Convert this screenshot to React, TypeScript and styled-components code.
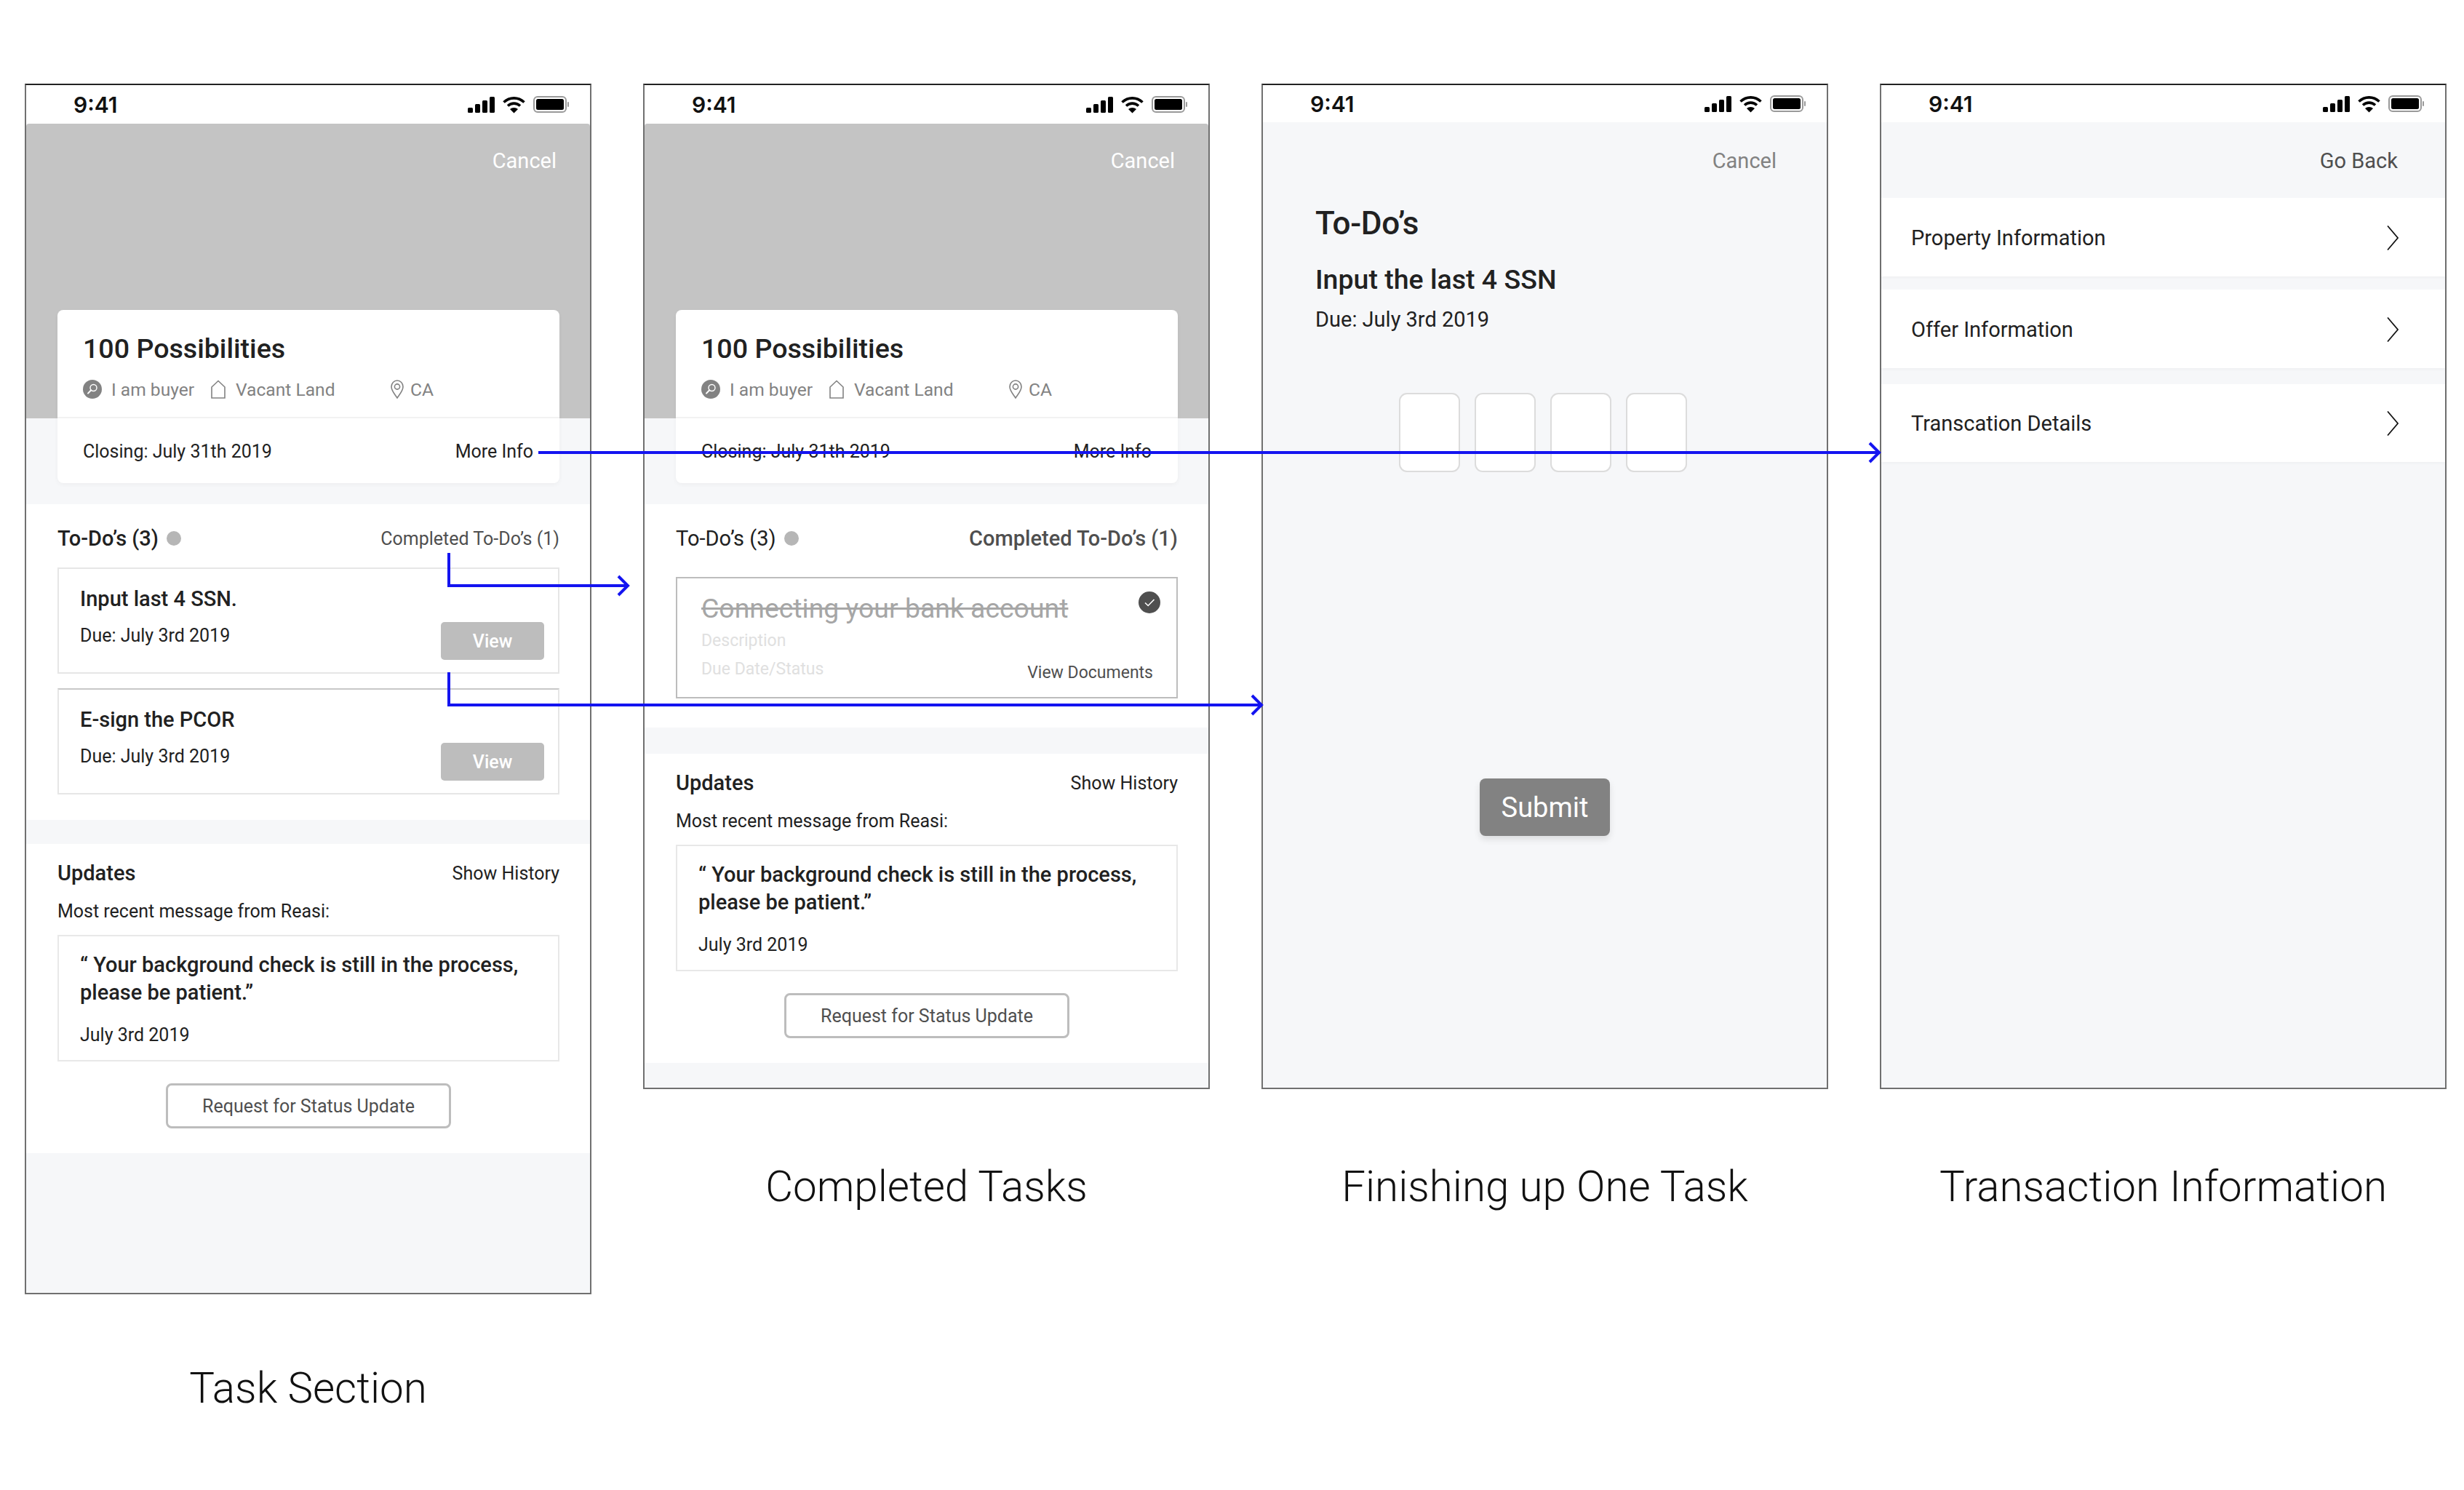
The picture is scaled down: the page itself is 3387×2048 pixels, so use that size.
import styled, { createGlobalStyle } from "styled-components";

const GlobalStyle = createGlobalStyle`
  html, body {
    margin: 0;
    padding: 0;
    background: #fff;
    overflow: hidden;
  }
  * {
    box-sizing: border-box;
  }
`;

const Page = styled.div`
  position: relative;
  width: 3387px;
  height: 2048px;
  padding: 115px 0 0 34px;
  display: flex;
  align-items: flex-start;
  gap: 71px;
  font-family: Roboto, sans-serif;
  color: #212121;
`;
const Column = styled.div`
  width: 779px;
  display: flex;
  flex-direction: column;
`;
const Phone = styled.div<{ $height: number }>`
  height: ${(p) => p.$height}px;
  display: flex;
  flex-direction: column;
  background: #f6f7f9;
  border: 2px solid #707070;
  border-top-color: #222;
`;
const Caption = styled.div<{ $top: number }>`
  margin-top: ${(p) => p.$top}px;
  text-align: center;
  font-size: 58.3px;
  font-weight: 300;
  line-height: 70px;
  color: #111;
`;

const StatusBar = styled.div<{ $height: number }>`
  height: ${(p) => p.$height}px;
  flex: none;
  display: flex;
  align-items: center;
  justify-content: space-between;
  padding: 0 29px 0 65px;
  background: #fff;
`;
const Clock = styled.span`
  font-family: Inter, sans-serif;
  font-size: 30px;
  font-weight: 600;
  color: #111;
`;
const StatusIcons = styled.div`
  display: flex;
  align-items: center;
  gap: 10px;
`;

const Hero = styled.div`
  height: 405px;
  flex: none;
  padding: 33px 46px 0 0;
  background: #c4c4c4;
  border-radius: 4px 4px 0 0;
  text-align: right;
`;
const TopLink = styled.div<{ $color: string }>`
  font-size: 29px;
  line-height: 36px;
  color: ${(p) => p.$color};
`;
const PropertyCard = styled.div`
  height: 238px;
  flex: none;
  margin: -149px 42px 0 43px;
  background: #fff;
  border-radius: 8px;
  box-shadow: 0 2px 6px rgba(0, 0, 0, 0.04);
`;
const PropertyTop = styled.div`
  height: 149px;
  padding: 30px 35px 0;
  border-bottom: 2px solid #f2f2f2;
`;
const PropertyName = styled.div`
  font-size: 37.6px;
  font-weight: 500;
  line-height: 46px;
`;
const Meta = styled.div`
  margin-top: 18px;
  display: flex;
  align-items: center;
  height: 30px;
  font-size: 24.6px;
  color: #828282;
`;
const MetaItem = styled.span<{ $width: number; $gap: number }>`
  width: ${(p) => p.$width}px;
  display: flex;
  align-items: center;
  gap: ${(p) => p.$gap}px;
`;
const PropertyBottom = styled.div`
  height: 89px;
  padding: 1px 36px 0 35px;
  display: flex;
  align-items: center;
  justify-content: space-between;
  font-size: 25px;
`;

const Section = styled.div<{ $top: number; $bottom: number }>`
  flex: none;
  margin-top: ${(p) => p.$top}px;
  padding: 0 42px ${(p) => p.$bottom}px 43px;
  background: #fff;
`;
const SectionHead = styled.div<{ $pad: number }>`
  height: 40px;
  box-sizing: content-box;
  display: flex;
  align-items: center;
  justify-content: space-between;
  padding-top: ${(p) => p.$pad}px;
`;
const TabLabel = styled.div<{ $active?: boolean; $size?: number; $color?: string }>`
  display: flex;
  align-items: center;
  gap: 11px;
  font-size: ${(p) => p.$size ?? 29}px;
  font-weight: ${(p) => (p.$active ? 500 : 400)};
  color: ${(p) => p.$color ?? "#212121"};
`;
const Dot = styled.span`
  width: 20px;
  height: 20px;
  border-radius: 50%;
  background: #b6b6b6;
`;
const TaskList = styled.div`
  margin-top: 20px;
  display: flex;
  flex-direction: column;
  gap: 20px;
`;
const TaskCard = styled.div<{ $topColor?: string }>`
  height: 146px;
  display: flex;
  justify-content: space-between;
  padding: 23px 19px 17px 29px;
  border: 2px solid #e6e6e6;
  border-top-color: ${(p) => p.$topColor ?? "#e6e6e6"};
`;
const TaskName = styled.div`
  font-size: 29px;
  font-weight: 500;
  line-height: 36px;
`;
const TaskDue = styled.div`
  margin-top: 18px;
  font-size: 25px;
  line-height: 30px;
`;
const ViewButton = styled.div`
  align-self: flex-end;
  width: 142px;
  height: 52px;
  display: flex;
  align-items: center;
  justify-content: center;
  background: #bdbdbd;
  border-radius: 5px;
  color: #fff;
  font-size: 25px;
  font-weight: 500;
`;

const DoneCard = styled.div`
  height: 167px;
  margin-top: 33px;
  padding: 18px 22px 0 33px;
  border: 2px solid #bdbdbd;
`;
const DoneTop = styled.div`
  display: flex;
  justify-content: space-between;
`;
const DoneTitle = styled.div`
  font-size: 37.4px;
  line-height: 46px;
  color: #a6a6a6;
  text-decoration: line-through;
`;
const DoneDescription = styled.div`
  margin-top: 7px;
  font-size: 23px;
  line-height: 30px;
  color: #e0e0e0;
`;
const DoneBottom = styled.div`
  margin-top: 9px;
  display: flex;
  justify-content: space-between;
  align-items: flex-end;
  font-size: 23px;
  line-height: 30px;
  color: #e0e0e0;
`;
const ViewDocuments = styled.span`
  margin: 0 10px 0 0;
  transform: translateY(5px);
  font-size: 23px;
  color: #4f4f4f;
`;

const RecentLabel = styled.div`
  margin-top: 18px;
  font-size: 25px;
  line-height: 30px;
`;
const QuoteBox = styled.div`
  height: 174px;
  margin-top: 17px;
  padding: 21px 20px 0 29px;
  border: 2px solid #e8e8e8;
`;
const QuoteText = styled.div`
  font-size: 29px;
  font-weight: 500;
  line-height: 37.5px;
`;
const QuoteDate = styled.div`
  margin-top: 25px;
  font-size: 25px;
  line-height: 30px;
`;
const OutlineButton = styled.div`
  width: 392px;
  height: 62px;
  margin: 30px auto 0;
  display: flex;
  align-items: center;
  justify-content: center;
  border: 3px solid #bdbdbd;
  border-radius: 8px;
  font-size: 25px;
  color: #4f4f4f;
`;

const FormHead = styled.div`
  padding: 35px 69px 0 72px;
`;
const RightText = styled.div`
  text-align: right;
`;
const FormTitle = styled.div`
  margin-top: 43px;
  font-size: 44px;
  font-weight: 500;
  line-height: 50px;
  letter-spacing: -0.3px;
`;
const FormSubtitle = styled.div`
  margin-top: 29px;
  font-size: 37.5px;
  font-weight: 500;
  line-height: 46px;
`;
const FormDue = styled.div`
  margin-top: 14px;
  font-size: 29px;
  line-height: 36px;
`;
const DigitRow = styled.div`
  margin-top: 83px;
  padding-right: 5px;
  display: flex;
  justify-content: center;
  gap: 20px;
`;
const DigitBox = styled.div`
  width: 84px;
  height: 109px;
  background: #fff;
  border: 2px solid #dcdcdc;
  border-radius: 11px;
`;
const SubmitButton = styled.div`
  width: 179px;
  height: 79px;
  margin-top: 421px;
  align-self: center;
  display: flex;
  align-items: center;
  justify-content: center;
  background: #828282;
  border-radius: 8px;
  box-shadow: 0 5px 10px rgba(0, 0, 0, 0.1);
  color: #fff;
  font-size: 38px;
`;

const BackBar = styled.div`
  height: 104px;
  flex: none;
  padding: 35px 65px 0 0;
`;
const InfoRow = styled.div<{ $top: number; $height: number }>`
  height: ${(p) => p.$height}px;
  margin-top: ${(p) => p.$top}px;
  flex: none;
  display: flex;
  align-items: center;
  justify-content: space-between;
  padding: 1px 64px 0 41px;
  background: #fff;
  box-shadow: 0 2px 4px rgba(0, 0, 0, 0.03);
  font-size: 29px;
`;

const ArrowLayer = styled.svg`
  position: absolute;
  top: 0;
  left: 0;
  pointer-events: none;
`;

const SignalIcon = () => (
  <svg width="37" height="22" viewBox="0 0 37 22">
    <rect x="0" y="15" width="7" height="7" rx="1.5" fill="#000" />
    <rect x="10" y="10" width="7" height="12" rx="1.5" fill="#000" />
    <rect x="20" y="5" width="7" height="17" rx="1.5" fill="#000" />
    <rect x="30" y="0" width="7" height="22" rx="1.5" fill="#000" />
  </svg>
);

const WifiIcon = () => (
  <svg width="33" height="24" viewBox="0 0 32 24" fill="none" stroke="#000" strokeWidth="3.6">
    <path d="M2 8.5C10 1 22 1 30 8.5" />
    <path d="M7.5 13.5C12.5 9 19.5 9 24.5 13.5" />
    <path d="M16 23.5L10.5 18C13.5 15.2 18.5 15.2 21.5 18Z" fill="#000" stroke="none" />
  </svg>
);

const BatteryIcon = () => (
  <svg width="49" height="23" viewBox="0 0 49 23">
    <rect x="1" y="1" width="44" height="21" rx="5" fill="none" stroke="#9a9a9a" strokeWidth="2" />
    <rect x="4" y="4" width="38" height="15" rx="2.5" fill="#000" />
    <rect x="47" y="8" width="2" height="7" rx="1" fill="#9a9a9a" />
  </svg>
);

const KeyBadge = () => (
  <svg width="26" height="26" viewBox="0 0 26 26">
    <circle cx="13" cy="13" r="13" fill="#828282" />
    <circle cx="14.5" cy="11" r="4.5" fill="none" stroke="#fff" strokeWidth="1.4" />
    <path d="M11.2 14.2L7 18.6" fill="none" stroke="#fff" strokeWidth="2" strokeLinecap="round" />
  </svg>
);

const HouseIcon = () => (
  <svg width="20" height="26" viewBox="0 0 20 26" fill="none" stroke="#828282" strokeWidth="1.6">
    <path d="M1 25V10L10 1.5L19 10V25Z" />
  </svg>
);

const PinIcon = () => (
  <svg width="18" height="26" viewBox="0 0 18 26" fill="none" stroke="#828282" strokeWidth="1.6">
    <path d="M9 25C5 19 1 15 1 9.5C1 4.8 4.6 1 9 1C13.4 1 17 4.8 17 9.5C17 15 13 19 9 25Z" />
    <circle cx="9" cy="9.5" r="3.6" />
  </svg>
);

const CheckBadge = () => (
  <svg width="30" height="30" viewBox="0 0 30 30">
    <circle cx="15" cy="15" r="15" fill="#4f4f4f" />
    <path d="M9 15.5L13.2 19.5L21.5 11" fill="none" stroke="#fff" strokeWidth="1.6" />
  </svg>
);

const Chevron = () => (
  <svg width="16" height="34" viewBox="0 0 16 34" fill="none" stroke="#111" strokeWidth="1.7">
    <path d="M1 0.5L15 17L1 33.5" />
  </svg>
);

const Arrows = () => (
  <ArrowLayer width="3387" height="2048" fill="none" stroke="#1414f0" strokeWidth="4">
    <path d="M740 622H2583" />
    <path d="M2570 609L2583 622L2570 635" />
    <path d="M617 760V805H863" />
    <path d="M850 792L863 805L850 818" />
    <path d="M617 924V969H1734" />
    <path d="M1721 956L1734 969L1721 982" />
  </ArrowLayer>
);

const Status = ({ height }: { height: number }) => (
  <StatusBar $height={height}>
    <Clock>9:41</Clock>
    <StatusIcons>
      <SignalIcon />
      <WifiIcon />
      <BatteryIcon />
    </StatusIcons>
  </StatusBar>
);

const PropertySummary = () => (
  <>
    <Hero>
      <TopLink $color="#fff">Cancel</TopLink>
    </Hero>
    <PropertyCard>
      <PropertyTop>
        <PropertyName>100 Possibilities</PropertyName>
        <Meta>
          <MetaItem $width={176} $gap={13}>
            <KeyBadge />I am buyer
          </MetaItem>
          <MetaItem $width={247} $gap={14}>
            <HouseIcon />
            Vacant Land
          </MetaItem>
          <MetaItem $width={80} $gap={9}>
            <PinIcon />
            CA
          </MetaItem>
        </Meta>
      </PropertyTop>
      <PropertyBottom>
        <span>Closing: July 31th 2019</span>
        <span>More Info</span>
      </PropertyBottom>
    </PropertyCard>
  </>
);

const Updates = ({ top }: { top: number }) => (
  <Section $top={top} $bottom={34}>
    <SectionHead $pad={20}>
      <TabLabel $active>Updates</TabLabel>
      <TabLabel $size={25}>Show History</TabLabel>
    </SectionHead>
    <RecentLabel>Most recent message from Reasi:</RecentLabel>
    <QuoteBox>
      <QuoteText>
        “ Your background check is still in the process,
        <br />
        please be patient.”
      </QuoteText>
      <QuoteDate>July 3rd 2019</QuoteDate>
    </QuoteBox>
    <OutlineButton>Request for Status Update</OutlineButton>
  </Section>
);

const tasks = [{ name: "Input last 4 SSN." }, { name: "E-sign the PCOR", topColor: "#c8c8c8" }];

const App = () => {
  return (
    <Page>
      <GlobalStyle />
      <Column>
        <Phone $height={1664}>
          <Status height={53} />
          <PropertySummary />
          <Section $top={29} $bottom={35}>
            <SectionHead $pad={27}>
              <TabLabel $active>
                To-Do’s (3) <Dot />
              </TabLabel>
              <TabLabel $size={25} $color="#4f4f4f">
                Completed To-Do’s (1)
              </TabLabel>
            </SectionHead>
            <TaskList>
              {tasks.map((task) => (
                <TaskCard key={task.name} $topColor={task.topColor}>
                  <div>
                    <TaskName>{task.name}</TaskName>
                    <TaskDue>Due: July 3rd 2019</TaskDue>
                  </div>
                  <ViewButton>View</ViewButton>
                </TaskCard>
              ))}
            </TaskList>
          </Section>
          <Updates top={33} />
        </Phone>
        <Caption $top={94}>Task Section</Caption>
      </Column>

      <Column>
        <Phone $height={1382}>
          <Status height={53} />
          <PropertySummary />
          <Section $top={29} $bottom={40}>
            <SectionHead $pad={27}>
              <TabLabel>
                To-Do’s (3) <Dot />
              </TabLabel>
              <TabLabel $active $color="#4f4f4f">
                Completed To-Do’s (1)
              </TabLabel>
            </SectionHead>
            <DoneCard>
              <DoneTop>
                <DoneTitle>Connecting your bank account</DoneTitle>
                <CheckBadge />
              </DoneTop>
              <DoneDescription>Description</DoneDescription>
              <DoneBottom>
                <span>Due Date/Status</span>
                <ViewDocuments>View Documents</ViewDocuments>
              </DoneBottom>
            </DoneCard>
          </Section>
          <Updates top={36} />
        </Phone>
        <Caption $top={99}>Completed Tasks</Caption>
      </Column>

      <Column>
        <Phone $height={1382}>
          <Status height={51} />
          <FormHead>
            <RightText>
              <TopLink $color="#828282">Cancel</TopLink>
            </RightText>
            <FormTitle>To-Do’s</FormTitle>
            <FormSubtitle>Input the last 4 SSN</FormSubtitle>
            <FormDue>Due: July 3rd 2019</FormDue>
          </FormHead>
          <DigitRow>
            {[0, 1, 2, 3].map((digit) => (
              <DigitBox key={digit} />
            ))}
          </DigitRow>
          <SubmitButton>Submit</SubmitButton>
        </Phone>
        <Caption $top={99}>Finishing up One Task</Caption>
      </Column>

      <Column>
        <Phone $height={1382}>
          <Status height={51} />
          <BackBar>
            <RightText>
              <TopLink $color="#4f4f4f">Go Back</TopLink>
            </RightText>
          </BackBar>
          <InfoRow $top={0} $height={108}>
            Property Information
            <Chevron />
          </InfoRow>
          <InfoRow $top={18} $height={108}>
            Offer Information
            <Chevron />
          </InfoRow>
          <InfoRow $top={22} $height={107}>
            Transcation Details
            <Chevron />
          </InfoRow>
        </Phone>
        <Caption $top={99}>Transaction Information</Caption>
      </Column>
      <Arrows />
    </Page>
  );
};

export default App;
